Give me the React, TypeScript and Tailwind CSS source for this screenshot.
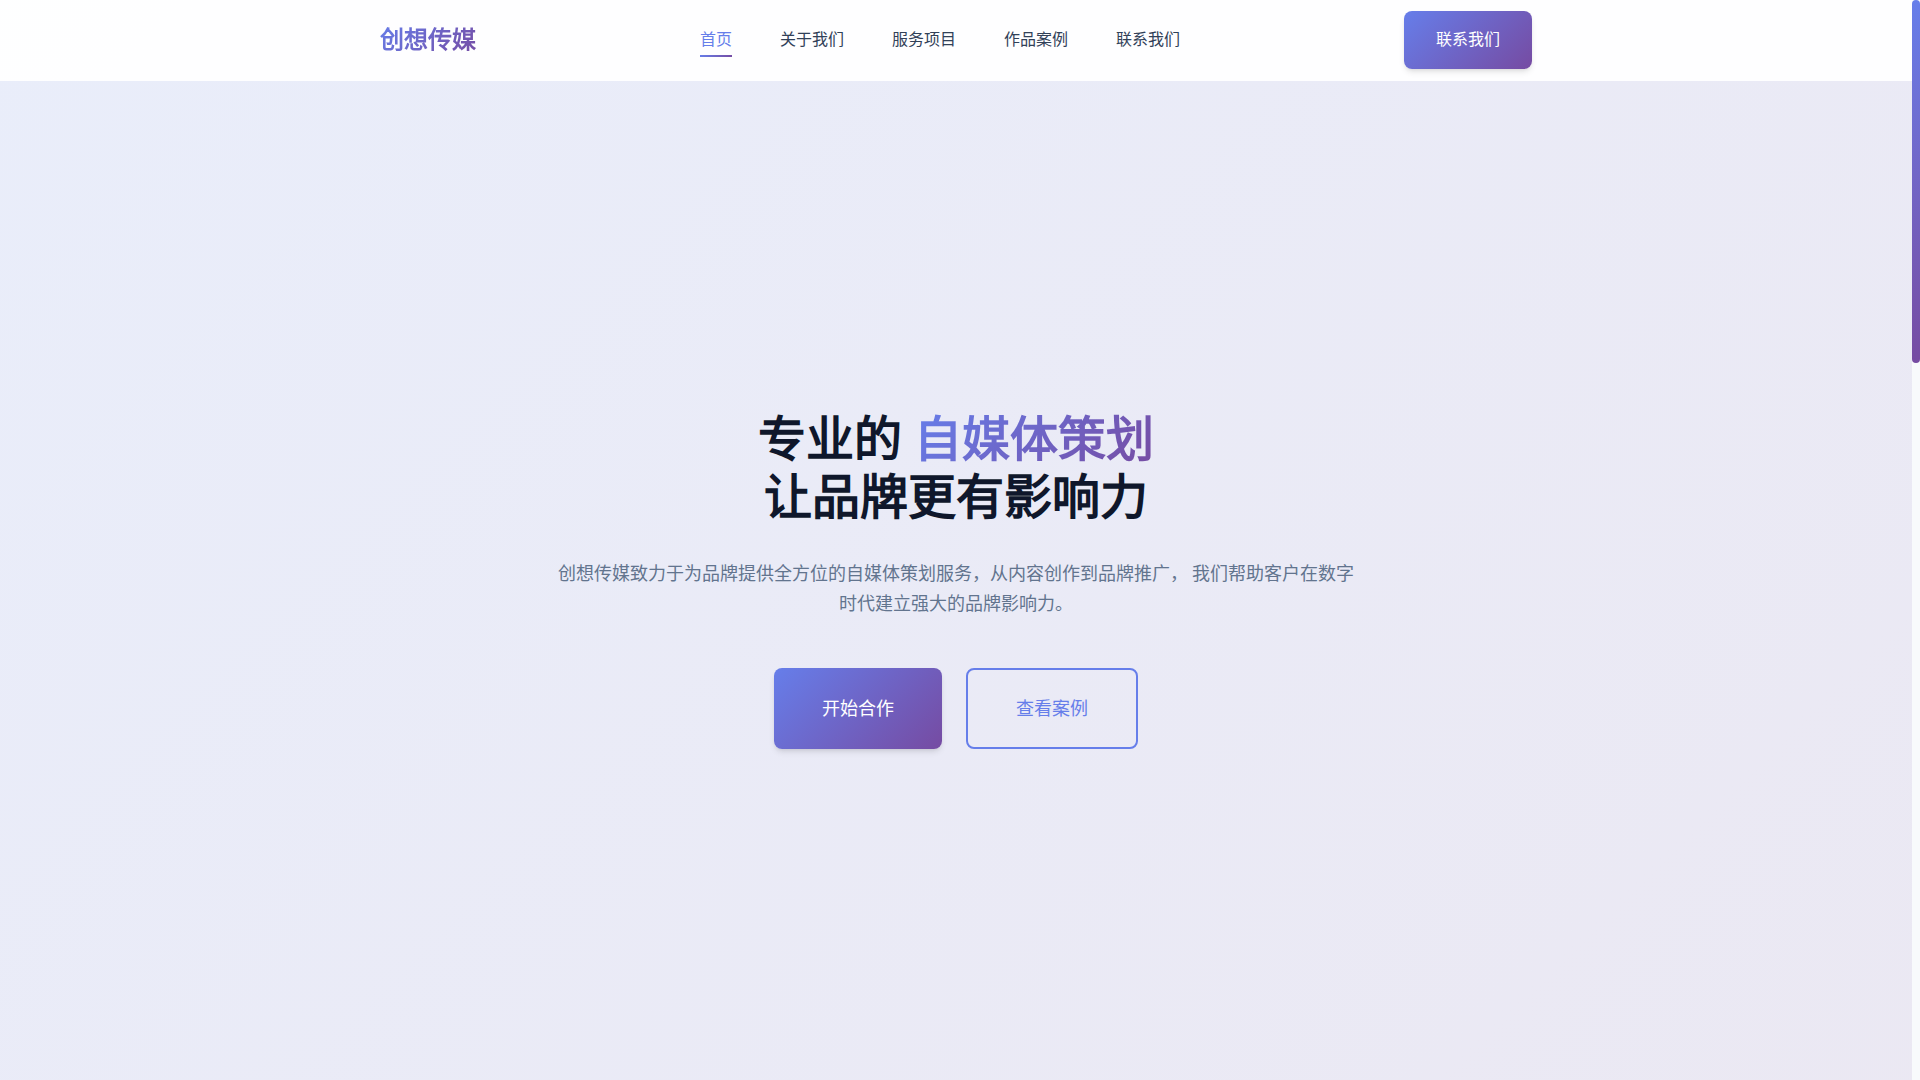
const navItems = [
  { label: "首页", href: "#home", active: true },
  { label: "关于我们", href: "#about", active: false },
  { label: "服务项目", href: "#services", active: false },
  { label: "作品案例", href: "#portfolio", active: false },
  { label: "联系我们", href: "#contact", active: false },
];

function Header() {
  return (
    <header className="absolute inset-x-0 top-0 z-10 border-b border-white/20 bg-white/95">
      <div className="mx-auto flex h-20 max-w-[1200px] items-center justify-between px-6">
        <a
          href="#home"
          className="bg-linear-[135deg,#667eea,#764ba2] bg-clip-text text-2xl leading-[38px] font-bold text-transparent"
        >
          创想传媒
        </a>
        <nav aria-label="主导航">
          <ul className="flex gap-12">
            {navItems.map((item) => (
              <li key={item.label}>
                <a
                  href={item.href}
                  aria-current={item.active ? "page" : undefined}
                  className={
                    item.active
                      ? "relative block leading-[26px] text-[#667eea] after:absolute after:inset-x-0 after:-bottom-1 after:h-0.5 after:bg-linear-[135deg,#667eea,#764ba2]"
                      : "block leading-[26px] text-slate-700"
                  }
                >
                  {item.label}
                </a>
              </li>
            ))}
          </ul>
        </nav>
        <button
          type="button"
          className="rounded-lg bg-linear-[135deg,#667eea,#764ba2] px-8 py-4 leading-[26px] text-white shadow-md"
        >
          联系我们
        </button>
      </div>
    </header>
  );
}

function Hero() {
  return (
    <main className="flex min-h-screen items-center justify-center bg-linear-[135deg,#667eea1a,#764ba21a] px-6 pt-20">
      <div className="max-w-[800px] text-center">
        <h1 className="mb-8 text-5xl leading-[58px] font-bold text-slate-900">
          专业的{" "}
          <span className="bg-linear-[135deg,#667eea,#764ba2] bg-clip-text text-transparent">
            自媒体策划
          </span>
          <br />
          让品牌更有影响力
        </h1>
        <p className="mb-[49px] text-lg leading-[30px] text-slate-500">
          创想传媒致力于为品牌提供全方位的自媒体策划服务，从内容创作到品牌推广， 我们帮助客户在数字时代建立强大的品牌影响力。
        </p>
        <div className="flex justify-center gap-6 text-lg leading-[29px]">
          <button
            type="button"
            className="rounded-lg bg-linear-[135deg,#667eea,#764ba2] px-12 py-6 text-white shadow-md"
          >
            开始合作
          </button>
          <button
            type="button"
            className="rounded-lg border-2 border-[#667eea] px-12 py-6 text-[#667eea]"
          >
            查看案例
          </button>
        </div>
      </div>
    </main>
  );
}

export default function App() {
  return (
    <div lang="zh-CN" className="flex min-h-screen bg-slate-50 font-['Roboto',sans-serif]">
      <div className="relative min-w-0 flex-1">
        <Header />
        <Hero />
      </div>
      <div aria-hidden="true" className="w-2 bg-slate-50">
        <div className="h-[363px] rounded bg-linear-to-b from-[#667eea] to-[#764ba2]" />
      </div>
    </div>
  );
}
